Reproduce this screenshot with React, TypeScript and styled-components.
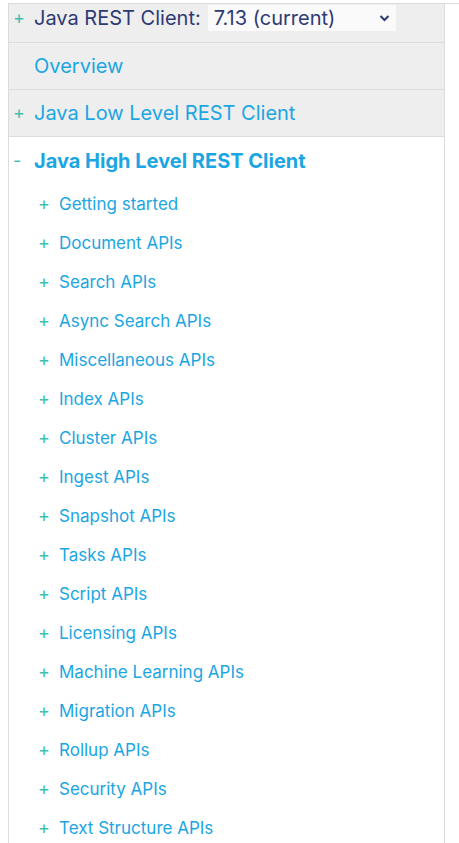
import styled, { createGlobalStyle } from "styled-components";

const GlobalStyle = createGlobalStyle`
  html, body {
    margin: 0;
    padding: 0;
    background: #fff;
    font-family: Inter, "Noto Sans", "Liberation Sans", sans-serif;
  }
`;

const subItems = [
  "Getting started",
  "Document APIs",
  "Search APIs",
  "Async Search APIs",
  "Miscellaneous APIs",
  "Index APIs",
  "Cluster APIs",
  "Ingest APIs",
  "Snapshot APIs",
  "Tasks APIs",
  "Script APIs",
  "Licensing APIs",
  "Machine Learning APIs",
  "Migration APIs",
  "Rollup APIs",
  "Security APIs",
  "Text Structure APIs",
];

const Page = styled.div`
  margin: 3px 0 0 8px;
  border-top: 1px solid #dcdcdc;
`;

const Panel = styled.nav`
  width: 435px;
  border-left: 1px solid #dcdcdc;
  border-right: 1px solid #dcdcdc;
  min-height: 900px;
`;

const TopRow = styled.div<{ $header?: boolean }>`
  display: flex;
  align-items: center;
  background: #eeeeee;
  border-bottom: 1px solid #dcdcdc;
  height: ${(p) => (p.$header ? "26px" : "46px")};
  padding: ${(p) => (p.$header ? "1px 0 11px" : "0")};
  font-size: 20px;
  line-height: 1;
`;

const Sign = styled.span<{ $indent?: number }>`
  display: inline-flex;
  width: 21px;
  padding-left: ${(p) => 4 + (p.$indent ?? 0)}px;
  color: #3ebfb0;
  font-size: 18px;
  font-weight: 400;
  flex: none;
`;

const HeaderLabel = styled.span`
  color: #2e3a74;
  margin-right: 7px;
`;

const VersionSelect = styled.div`
  display: flex;
  align-items: center;
  justify-content: space-between;
  width: 176px;
  height: 26px;
  padding: 0 6px;
  background: #fafafa;
  color: #2e3a74;
  font-size: 20px;
`;

const Link = styled.a<{ $bold?: boolean }>`
  color: #1ba6e3;
  text-decoration: none;
  font-weight: ${(p) => (p.$bold ? 700 : 400)};
`;

const OpenSection = styled.div`
  display: flex;
  flex-direction: column;
`;

const SectionHead = styled.div`
  display: flex;
  align-items: center;
  height: 47px;
  font-size: 20px;
`;

const SubRow = styled.div`
  display: flex;
  align-items: center;
  height: 39px;
  font-size: 17px;
`;

const Chevron = () => (
  <svg width="11" height="8" viewBox="0 0 11 8" fill="none">
    <path d="M1.5 2 L5.5 6 L9.5 2" stroke="#2e3a74" strokeWidth="2" />
  </svg>
);

export default function App() {
  return (
    <>
      <GlobalStyle />
      <Page>
        <Panel>
          <TopRow $header>
            <Sign>+</Sign>
            <HeaderLabel>Java REST Client:</HeaderLabel>
            <VersionSelect>
              <span>7.13 (current)</span>
              <Chevron />
            </VersionSelect>
          </TopRow>
          <TopRow>
            <Sign />
            <Link>Overview</Link>
          </TopRow>
          <TopRow>
            <Sign>+</Sign>
            <Link>Java Low Level REST Client</Link>
          </TopRow>
          <OpenSection>
            <SectionHead>
              <Sign>-</Sign>
              <Link $bold>Java High Level REST Client</Link>
            </SectionHead>
            {subItems.map((item) => (
              <SubRow key={item}>
                <Sign $indent={25}>+</Sign>
                <Link>{item}</Link>
              </SubRow>
            ))}
          </OpenSection>
        </Panel>
      </Page>
    </>
  );
}
